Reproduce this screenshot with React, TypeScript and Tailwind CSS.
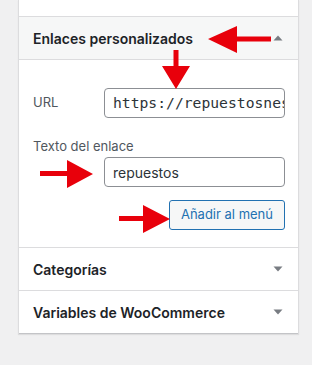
import React from 'react';

const font = { fontFamily: 'Inter, "Noto Sans", sans-serif' };

function Caret({ up }: { up?: boolean }) {
  return (
    <svg width="10" height="6" viewBox="0 0 10 6" className="text-[#787c82]">
      {up ? <polygon points="5,0.5 9.5,5.5 0.5,5.5" fill="currentColor" /> : <polygon points="0.5,0.5 9.5,0.5 5,5.5" fill="currentColor" />}
    </svg>
  );
}

function SectionTitle({ title, open, last }: { title: string; open?: boolean; last?: boolean }) {
  return (
    <div
      className={`flex h-[43px] items-center justify-between border-b pl-[14px] pr-[15px] ${last ? 'border-[#c3c4c7]' : 'border-[#dcdcde]'} ${open ? 'bg-[#f6f7f7]' : 'bg-white'}`}
    >
      <span className="text-[14px] font-semibold text-[#1d2327]">{title}</span>
      <Caret up={open} />
    </div>
  );
}

export default function App() {
  return (
    <div className="relative h-[365px] w-[312px] overflow-hidden bg-[#f0f0f1]" style={font}>
      <div className="ml-[18px] w-[281px] border-x border-[#dcdcde] bg-white shadow-[0_1px_1px_rgba(0,0,0,0.08)]">
        <div className="h-[17px] border-b border-[#dcdcde]" />
        <SectionTitle title="Enlaces personalizados" open />
        <div className="flex flex-col border-b border-[#dcdcde] pb-[17px] pl-[14px] pr-[13px] pt-[28px]">
          <div className="flex items-center justify-between">
            <span className="text-[13px] text-[#50575e]">URL</span>
            <div
              className="flex h-[30px] w-[181px] items-center overflow-hidden whitespace-nowrap rounded-[4px] border border-[#8c8f94] pl-[8px] text-[14.7px] text-[#2c3338]"
              style={{ fontFamily: '"DejaVu Sans Mono", "Liberation Mono", monospace' }}
            >
              https://repuestosnes
            </div>
          </div>
          <span className="mt-[20px] text-[13px] leading-[16px] text-[#50575e]">Texto del enlace</span>
          <div className="mt-[3px] flex justify-end">
            <div className="flex h-[30px] w-[181px] items-center rounded-[4px] border border-[#8c8f94] pl-[8px] text-[14px] text-[#2c3338]">
              repuestos
            </div>
          </div>
          <div className="mt-[13px] flex justify-end">
            <div className="flex h-[30px] items-center rounded-[3px] border border-[#2271b1] bg-[#f6f7f7] px-[11px] text-[13px] text-[#2271b1]">
              Añadir al menú
            </div>
          </div>
        </div>
        <SectionTitle title="Categorías" />
        <SectionTitle title="Variables de WooCommerce" last />
      </div>

      <svg className="pointer-events-none absolute inset-0" width="312" height="365" viewBox="0 0 312 365">
        <g fill="#e8000b">
          <polygon points="208,39 237,26 237,36.5 271,36.5 271,41.5 237,41.5 237,53" />
          <polygon points="176,89 162,66 173.5,66 173.5,50 178.5,50 178.5,66 190,66" />
          <polygon points="93,174 67,160 67,171 40,171 40,176 67,176 67,188" />
          <polygon points="170,219 143,205 143,216 119,216 119,221 143,221 143,233" />
        </g>
      </svg>
    </div>
  );
}
